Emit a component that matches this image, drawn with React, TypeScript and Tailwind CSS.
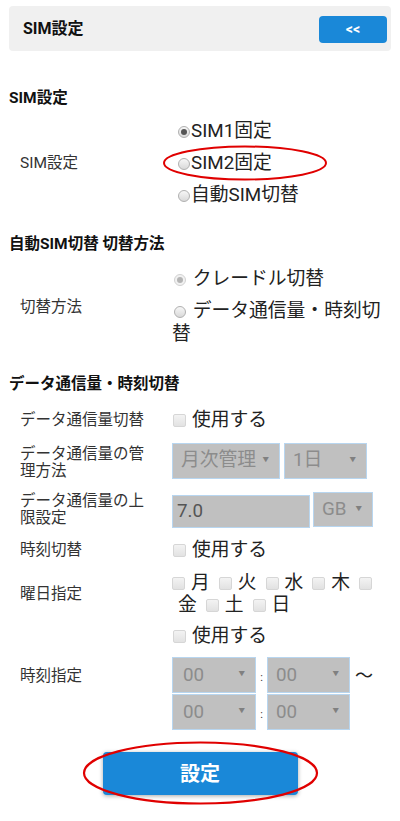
import React from "react";

const FONT = "font-['Roboto','Noto_Sans_CJK_JP',sans-serif]";

function Radio({ checked, disabled, className = "" }: { checked?: boolean; disabled?: boolean; className?: string }) {
  return (
    <span
      className={`inline-flex items-center justify-center align-middle w-[12px] h-[12px] rounded-full border ${
        disabled ? "border-[#d2d2d2] bg-[#f1f1f1]" : "border-[#b0b0b0] bg-gradient-to-b from-[#f7f7f7] to-[#d9d9d9]"
      } ${className}`}
    >
      {checked && <span className={`w-[6px] h-[6px] rounded-full ${disabled ? "bg-[#b4b4b4]" : "bg-[#555]"}`} />}
    </span>
  );
}

function Checkbox({ className = "" }: { className?: string }) {
  return (
    <span
      className={`inline-block shrink-0 w-[13px] h-[13px] rounded-[2px] border border-[#d6d6d6] bg-gradient-to-b from-[#f3f3f3] to-[#e2e2e2] ${className}`}
    />
  );
}

function Select({ value, className = "" }: { value: string; className?: string }) {
  return (
    <div
      className={`flex items-center justify-between bg-[#c0c0c0] border border-[#b8d6f0] pl-[8px] pr-[10px] text-[18.8px] text-[#8c8c8c] ${className}`}
    >
      <span>{value}</span>
      <span className="text-[6.5px] text-[#808080]">▼</span>
    </div>
  );
}

function Label({ children }: { children: React.ReactNode }) {
  return (
    <div className="w-[163px] shrink-0 pl-[11px] pr-[22px] text-[15.5px] leading-[17px] text-[#333]">{children}</div>
  );
}

function Heading({ children, className = "" }: { children: React.ReactNode; className?: string }) {
  return <div className={`text-[15.5px] leading-[20px] font-bold text-[#111] ${className}`}>{children}</div>;
}

export default function App() {
  return (
    <div className={`relative w-[400px] min-h-[821px] bg-white px-[9px] pt-[6px] ${FONT}`}>
      {/* Header */}
      <div className="flex h-[45px] items-center justify-between rounded-[4px] bg-[#f0f0f0] pl-[14px] pr-[4px]">
        <span className="text-[16px] font-bold text-[#111]">SIM設定</span>
        <button className="mt-[2px] h-[27px] w-[68px] rounded-[4px] bg-[#1a88d8] text-[14px] font-bold text-white">
          &lt;&lt;
        </button>
      </div>

      {/* SIM設定 */}
      <Heading className="mt-[37px]">SIM設定</Heading>
      <div className="mt-[12px] flex items-center">
        <Label>SIM設定</Label>
        <div className="flex flex-col gap-[9px] text-[18.8px] text-[#222]">
          <div className="flex h-[23px] items-center">
            <Radio checked className="ml-[6px] mr-[1px]" />
            <span>SIM1固定</span>
          </div>
          <div className="flex h-[23px] items-center">
            <Radio className="ml-[6px] mr-[1px]" />
            <span>SIM2固定</span>
          </div>
          <div className="flex h-[23px] items-center">
            <Radio className="ml-[6px] mr-[1px]" />
            <span>自動SIM切替</span>
          </div>
        </div>
      </div>

      {/* 自動SIM切替 切替方法 */}
      <Heading className="mt-[27px]">自動SIM切替 切替方法</Heading>
      <div className="mt-[14px] flex items-center">
        <Label>切替方法</Label>
        <div className="flex flex-1 flex-col gap-[9px] text-[18.8px] leading-[23px] text-[#222]">
          <div>
            <Radio checked disabled className="ml-[2px] mr-[2px]" /> クレードル切替
          </div>
          <div>
            <Radio className="ml-[2px] mr-[2px]" /> データ通信量・時刻切替
          </div>
        </div>
      </div>

      {/* データ通信量・時刻切替 */}
      <Heading className="mt-[28px]">データ通信量・時刻切替</Heading>

      <div className="mt-[12px] flex h-[28px] items-center">
        <Label>データ通信量切替</Label>
        <div className="flex items-center text-[18.8px] text-[#222]">
          <Checkbox className="ml-[1px] mr-[6px]" />
          <span>使用する</span>
        </div>
      </div>

      <div className="mt-[7px] flex items-center">
        <Label>
          <div className="pt-[5px]">データ通信量の管理方法</div>
        </Label>
        <div className="flex gap-[4px]">
          <Select value="月次管理" className="h-[36px] w-[108px]" />
          <Select value="1日" className="h-[36px] w-[83px]" />
        </div>
      </div>

      <div className="mt-[12px] flex items-center">
        <Label>データ通信量の上限設定</Label>
        <div className="flex items-start gap-[3px]">
          <div className="mt-[3px] flex h-[33px] w-[138px] items-center border border-[#b8d6f0] bg-[#c0c0c0] pl-[4px] text-[18.8px] text-[#555]">
            7.0
          </div>
          <Select value="GB" className="h-[35px] w-[60px]" />
        </div>
      </div>

      <div className="mt-[8px] flex h-[28px] items-center">
        <Label>時刻切替</Label>
        <div className="flex items-center text-[18.8px] text-[#222]">
          <Checkbox className="ml-[1px] mr-[6px]" />
          <span>使用する</span>
        </div>
      </div>

      <div className="mt-[8px] flex items-center">
        <Label>曜日指定</Label>
        <div className="flex flex-col text-[18.8px] leading-[22px] text-[#222]">
          <div className="flex items-center gap-[9px]">
            {["月", "火", "水", "木"].map((d) => (
              <span key={d} className="flex items-center">
                <Checkbox className="mr-[6px]" />
                {d}
              </span>
            ))}
            <Checkbox />
          </div>
          <div className="flex items-center gap-[9px] pl-[6px]">
            <span>金</span>
            {["土", "日"].map((d) => (
              <span key={d} className="flex items-center">
                <Checkbox className="mr-[6px]" />
                {d}
              </span>
            ))}
          </div>
        </div>
      </div>

      <div className="mt-[6px] flex items-center">
        <Label>時刻指定</Label>
        <div className="flex flex-col">
          <div className="flex h-[28px] items-center text-[18.8px] text-[#222]">
            <Checkbox className="ml-[1px] mr-[6px]" />
            <span>使用する</span>
          </div>
          <div className="mt-[7px] flex flex-col gap-[1px]">
            <div className="flex items-center">
              <Select value="00" className="h-[36px] w-[84px] pl-[10px]" />
              <span className="w-[11px] pt-[6px] text-center text-[11px] text-[#333]">:</span>
              <Select value="00" className="h-[36px] w-[83px]" />
              <span className="ml-[5px] text-[18px] text-[#222]">〜</span>
            </div>
            <div className="flex items-center">
              <Select value="00" className="h-[36px] w-[84px] pl-[10px]" />
              <span className="w-[11px] pt-[6px] text-center text-[11px] text-[#333]">:</span>
              <Select value="00" className="h-[36px] w-[83px]" />
            </div>
          </div>
        </div>
      </div>

      <div className="mt-[22px] flex justify-center">
        <button className="h-[43px] w-[195px] rounded-[4px] bg-[#1a88d8] text-[20px] font-bold text-white shadow-[0_1px_4px_rgba(0,0,0,0.35)]">
          設定
        </button>
      </div>

      {/* red annotation ellipses */}
      <svg className="pointer-events-none absolute left-[162px] top-[145px]" width="166" height="36">
        <ellipse cx="83" cy="18" rx="81" ry="16.5" fill="none" stroke="#e00000" strokeWidth="2" />
      </svg>
      <svg className="pointer-events-none absolute left-[82px] top-[741px]" width="237" height="64">
        <ellipse cx="118.5" cy="32" rx="116.5" ry="30.5" fill="none" stroke="#e00000" strokeWidth="2.2" />
      </svg>
    </div>
  );
}
